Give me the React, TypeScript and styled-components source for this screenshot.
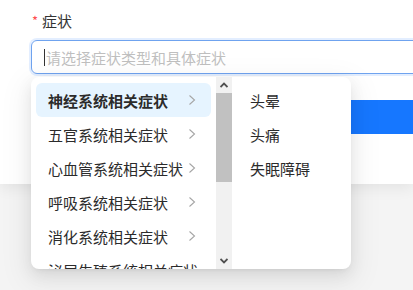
import { styled, createGlobalStyle } from "styled-components";

const GlobalStyle = createGlobalStyle`
  html, body {
    margin: 0;
    padding: 0;
    width: 413px;
    height: 290px;
    overflow: hidden;
    background: #f4f4f4;
    font-family: "Noto Sans CJK SC", "Noto Sans", sans-serif;
  }
`;

const Page = styled.div`
  position: relative;
  width: 413px;
  height: 290px;
  overflow: hidden;
`;

const Card = styled.div`
  height: 184px;
  box-sizing: border-box;
  padding: 8px 0 0 31px;
  background: #fff;
  box-shadow: 0 4px 14px rgba(0, 0, 0, 0.07);
`;

const Label = styled.div`
  display: flex;
  align-items: center;
  gap: 4px;
  height: 24px;
  font-size: 15px;
  color: #333;
`;

const Star = styled.span`
  color: #ff4d4f;
  font-size: 13px;
  padding-left: 1px;
`;

const Input = styled.div`
  display: flex;
  align-items: center;
  margin-top: 8px;
  width: 420px;
  height: 34px;
  box-sizing: border-box;
  padding-left: 12px;
  border: 1px solid #6fa3ef;
  border-radius: 6px;
  box-shadow: 0 0 0 2px rgba(24, 119, 255, 0.12);
  font-size: 15px;
  color: #bfbfbf;
`;

const Caret = styled.span`
  width: 1px;
  height: 17px;
  margin-right: 1px;
  background: #333;
`;

const Button = styled.div`
  margin-top: 26px;
  width: 420px;
  height: 34px;
  background: #1677ff;
  border-radius: 6px;
`;

const Dropdown = styled.div`
  position: absolute;
  top: 77px;
  left: 31px;
  width: 320px;
  height: 192px;
  display: flex;
  background: #fff;
  border-radius: 8px;
  overflow: hidden;
  box-shadow: 0 6px 16px rgba(0, 0, 0, 0.08), 0 3px 6px -4px rgba(0, 0, 0, 0.12),
    0 9px 28px 8px rgba(0, 0, 0, 0.05);
`;

const Menu = styled.div<{ $width: number; $indent: number }>`
  width: ${(p) => p.$width}px;
  box-sizing: border-box;
  padding: 6px 5px 0;
  overflow: hidden;
  flex-shrink: 0;

  & > div {
    padding-left: ${(p) => p.$indent}px;
  }
`;

const Item = styled.div<{ $active?: boolean }>`
  display: flex;
  align-items: center;
  justify-content: space-between;
  height: 34px;
  padding-right: 15px;
  border-radius: 6px;
  font-size: 15px;
  white-space: nowrap;
  color: #2b2b2b;
  font-weight: ${(p) => (p.$active ? 600 : 400)};
  background: ${(p) => (p.$active ? "#e6f4ff" : "transparent")};
`;

const Scrollbar = styled.div`
  width: 16px;
  flex-shrink: 0;
  display: flex;
  flex-direction: column;
  background: #f1f1f1;
`;

const Arrow = styled.div`
  height: 16px;
  display: flex;
  align-items: center;
  justify-content: center;
`;

const Track = styled.div`
  flex: 1;
`;

const Thumb = styled.div`
  height: 89px;
  background: #c1c1c1;
`;

const Chevron = () => (
  <svg width="8" height="12" viewBox="0 0 8 12" fill="none">
    <path d="M1.5 1.5L6.5 6L1.5 10.5" stroke="#a6a6a6" strokeWidth="1.1" />
  </svg>
);

const ScrollArrow = ({ up }: { up?: boolean }) => (
  <svg width="8" height="6" viewBox="0 0 8 6">
    <path
      d={up ? "M0.5 5L4 1.5L7.5 5" : "M0.5 1L4 4.5L7.5 1"}
      stroke="#505050"
      strokeWidth="1.8"
      fill="none"
    />
  </svg>
);

const categories = [
  "神经系统相关症状",
  "五官系统相关症状",
  "心血管系统相关症状",
  "呼吸系统相关症状",
  "消化系统相关症状",
  "泌尿生殖系统相关症状",
];

const symptoms = ["头晕", "头痛", "失眠障碍"];

export default function App() {
  return (
    <Page>
      <GlobalStyle />
      <Card>
        <Label>
          <Star>*</Star>症状
        </Label>
        <Input>
          <Caret />
          请选择症状类型和具体症状
        </Input>
        <Button />
      </Card>
      <Dropdown>
        <Menu $width={185} $indent={12}>
          {categories.map((c, i) => (
            <Item key={c} $active={i === 0}>
              {c}
              <Chevron />
            </Item>
          ))}
        </Menu>
        <Scrollbar>
          <Arrow>
            <ScrollArrow up />
          </Arrow>
          <Thumb />
          <Track />
          <Arrow>
            <ScrollArrow />
          </Arrow>
        </Scrollbar>
        <Menu $width={119} $indent={13}>
          {symptoms.map((s) => (
            <Item key={s}>{s}</Item>
          ))}
        </Menu>
      </Dropdown>
    </Page>
  );
}
